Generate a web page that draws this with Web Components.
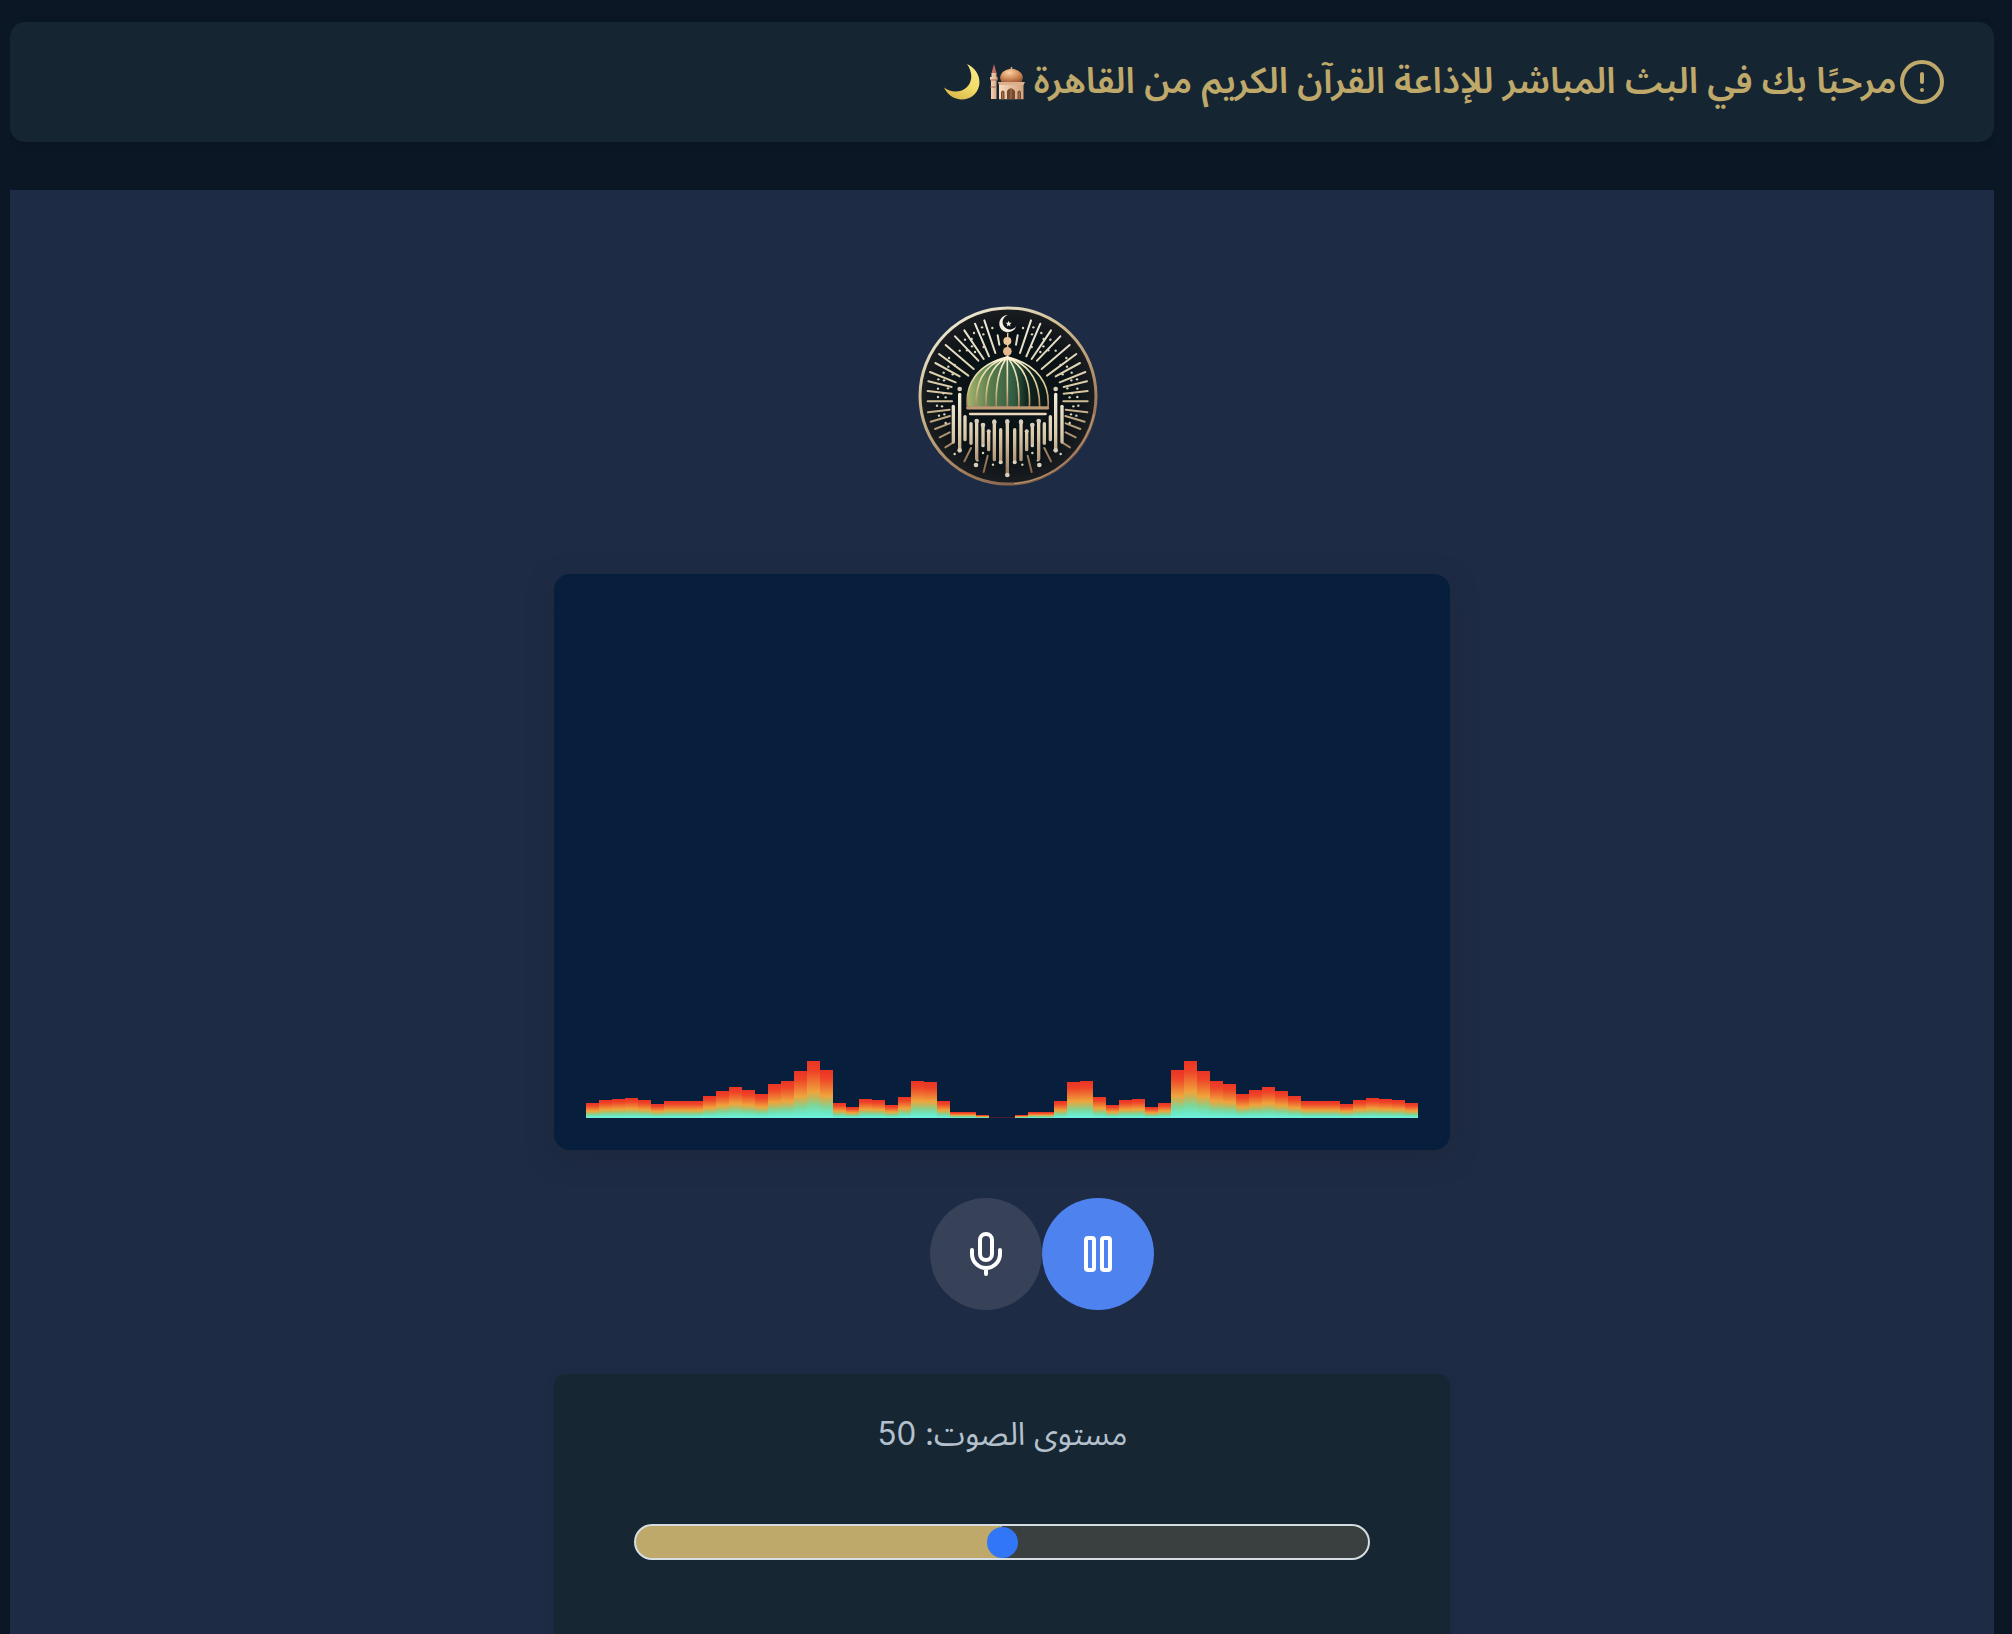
<!DOCTYPE html>
<html lang="ar" dir="rtl">
<head>
<meta charset="utf-8">
<title>إذاعة القرآن الكريم من القاهرة</title>
<style>
html,body{margin:0;height:100%;background:#0b1724;overflow:hidden}
body{font-family:"Noto Sans Arabic","Noto Sans","DejaVu Sans",sans-serif}
</style>
</head>
<body>
<radio-page></radio-page>
<script>
const define=(name,html,ready)=>customElements.define(name,class extends HTMLElement{
  connectedCallback(){
    if(this.shadowRoot)return;
    const root=this.attachShadow({mode:'open'});
    root.innerHTML=html;
    if(ready)ready.call(this,root);
  }
});

/* Squeezes or stretches one line of text to the width given in the attribute. */
define('fit-text',`<style>:host{display:block;white-space:nowrap}
span{display:inline-block;transform-origin:100% 50%}</style><span><slot></slot></span>`,function(root){
  const want=+this.getAttribute('width'),s=root.querySelector('span');
  this.style.width=want+'px';
  s.style.transform='scaleX('+want/s.getBoundingClientRect().width+')';
});

define('alert-icon',`<style>:host{display:block;width:48px;height:48px}svg{display:block}</style>
<svg width="48" height="48" viewBox="0 0 24 24" fill="none" stroke="currentColor" stroke-width="2" stroke-linecap="round"><circle cx="12" cy="12" r="10"/><path d="M12 8v4M12 16h.01"/></svg>`);

define('moon-emoji',`<style>:host{display:block;width:36px;height:36px}svg{display:block}</style>
<svg width="36" height="36" viewBox="0 0 36 36" role="img"><defs><linearGradient id="m" x1=".8" y1="0" x2=".3" y2="1"><stop offset="0" stop-color="#f7e98a"/><stop offset=".55" stop-color="#f1dc66"/><stop offset="1" stop-color="#d9b84a"/></linearGradient></defs>
<path d="M23 0C32 4 37 13 35 22C33 31 25 36 17 35.500C9 35 3 30 0 23.500C7 29 17 29 23 23C29 17 28.500 8 23 0Z" fill="url(#m)"/></svg>`);

define('mosque-emoji',`<style>:host{display:block;width:36px;height:36px}svg{display:block}</style>
<svg width="36" height="36" viewBox="0 0 36 36" role="img"><defs>
<radialGradient id="d" cx=".4" cy=".3" r=".8"><stop offset="0" stop-color="#fbd0a4"/><stop offset=".5" stop-color="#d8935f"/><stop offset="1" stop-color="#995632"/></radialGradient>
<linearGradient id="w"><stop offset="0" stop-color="#f6d9bd"/><stop offset="1" stop-color="#d3a47d"/></linearGradient></defs>
<path d="M5 0L7.500 9H2.500Z" fill="#bd6a60"/><path d="M2.500 9h5v4h1v3H7.500V35H2V16H1V13h1.500Z" fill="url(#w)"/><path d="M1 16h8M1 23h7" stroke="#9a6b55" stroke-width="1"/>
<rect x="10" y="20" width="24.500" height="15.200" fill="url(#w)"/>
<path d="M12.500 18C8 10 16 5.500 22.500 4.500C29 5.500 37 10 32.500 18Z" fill="url(#d)"/><path d="M22.500 3v2" stroke="#d8a77d" stroke-width="1.500"/>
<path d="M9 18h27l-1.500 3H10Z" fill="#dcb08c"/>
<path d="M12 35v-7q1.800-3 3.500 0v7ZM28.500 35v-7q1.800-3 3.500 0v7ZM18 35v-8q3.500-5.500 8 0v8Z" fill="#754832"/><path d="M22 24v11M13.700 28v7M30.200 28v7" stroke="#af7a50"/></svg>`);

define('welcome-banner',`<style>
:host{display:flex;flex:none;align-items:center;height:120px;box-sizing:border-box;padding:0 48px;background:#162532;border-radius:15px;color:#bea86a;box-shadow:0 2px 8px #07101b33}
.t{font-size:36px;line-height:56px;font-weight:600;margin-inline-start:1px}
mosque-emoji{margin-inline-start:9px}moon-emoji{margin-inline-start:9px}
</style><alert-icon></alert-icon><fit-text class="t" width="863">مرحبًا بك في البث المباشر للإذاعة القرآن الكريم من القاهرة</fit-text><mosque-emoji aria-label="🕌"></mosque-emoji><moon-emoji aria-label="🌙"></moon-emoji>`);

define('radio-logo',`<style>:host{display:block;flex:none;width:180px;height:180px}svg{display:block}</style>
<svg width="180" height="180" viewBox="55 49 540 540" fill="none" stroke-linecap="round"><defs>
<linearGradient id="ring" x1=".2" y1="0" x2=".75" y2="1"><stop offset="0" stop-color="#f1efdc"/><stop offset=".35" stop-color="#cdb98c"/><stop offset=".7" stop-color="#a58461"/><stop offset="1" stop-color="#7b5843"/></linearGradient>
<linearGradient id="ray" gradientUnits="userSpaceOnUse" x1="0" y1="90" x2="0" y2="560"><stop offset="0" stop-color="#eeecdc"/><stop offset=".45" stop-color="#d9c9a3"/><stop offset="1" stop-color="#866345"/></linearGradient>
<linearGradient id="bar" gradientUnits="userSpaceOnUse" x1="0" y1="310" x2="0" y2="560"><stop offset="0" stop-color="#f5eedc"/><stop offset=".5" stop-color="#d9c9aa"/><stop offset="1" stop-color="#987758"/></linearGradient>
<linearGradient id="dome"><stop offset="0" stop-color="#a3b56d"/><stop offset=".3" stop-color="#567a4c"/><stop offset=".58" stop-color="#315b43"/><stop offset=".74" stop-color="#10251f"/><stop offset="1" stop-color="#0a1515"/></linearGradient>
<linearGradient id="rib" gradientUnits="userSpaceOnUse" x1="0" y1="200" x2="0" y2="355"><stop offset="0" stop-color="#fff6d8"/><stop offset=".6" stop-color="#d9c78f"/><stop offset="1" stop-color="#a87d58"/></linearGradient>
<radialGradient id="bg"><stop offset="0" stop-color="#081417"/><stop offset=".75" stop-color="#0b1216"/><stop offset="1" stop-color="#1c1e21"/></radialGradient></defs>
<circle cx="325" cy="319" r="264" fill="url(#bg)" stroke="url(#ring)" stroke-width="9"/>
<path d="M583 375A264 264 0 0 1 345 582" stroke="#dcb98a" stroke-width="2"/>
<g id="rays" stroke="url(#ray)" stroke-width="6"></g><g id="dots" fill="#ded5ba"></g>
<path d="M324 131v70" stroke="#e9c99c" stroke-width="4"/>
<path d="M325 76A26 26 0 1 0 350 108A22 22 0 1 1 325 76Z" fill="#f3efe2"/><path d="M327 93l2.500 6 6.500.5-5 4.500 1.500 6.500-5.500-3.500-5.500 3.500 1.500-6.500-5-4.500 6.500-.5Z" fill="#f3efe2"/>
<circle cx="323" cy="154" r="12" fill="#edc79a"/><circle cx="323" cy="185" r="13" fill="#e5b98d"/>
<path d="M203 353C197 285 230 225 323 202C416 225 451 285 445 353Z" fill="url(#dome)" stroke="url(#rib)" stroke-width="5"/>
<path d="M323 202V352M323 202C297 235 287 280 290 352M323 202C270 232 257 280 259 352M323 202C245 228 228 285 229 352M323 202C350 235 361 280 357 352M323 202C377 232 393 280 389 352M323 202C400 228 420 285 420 352" stroke="url(#rib)" stroke-width="5"/>
<path d="M204 355H444" stroke="#bd9874" stroke-width="9"/><path d="M211 373H438" stroke="#ead6bb" stroke-width="7"/>
<g id="bars" stroke="url(#bar)" stroke-width="10"></g><g id="knobs" fill="#d9cdbb"></g></svg>`,function(root){
  const NS='http://www.w3.org/2000/svg';
  const add=(id,tag,attrs)=>{const e=document.createElementNS(NS,tag);for(const k in attrs)e.setAttribute(k,attrs[k]);root.getElementById(id).append(e)};
  const both=f=>{f(x=>x);f(x=>648-x)};
  const rays=[[254,92,287,190],[226,102,268,200],[194,122,252,208],[166,140,236,213],[138,166,222,238],[118,193,206,258],[107,220,180,260],[91,247,168,278],[86,275,156,292],[84,304,156,312],[84,335,157,335],[85,368,150,360],[93,396,151,379],[106,418,150,401],[120,443,150,428],[137,473,160,459],[214,475,194,515],[264,498,252,547],[294,137,299,165]];
  const dots=[[196,150],[223,130],[247,113],[278,115],[216,148],[251,134],[217,170],[252,172],[180,183],[202,182],[226,187],[148,205],[165,226],[146,231],[132,249],[159,254],[116,269],[133,272],[145,296],[115,297],[131,311],[115,322],[138,323],[112,348],[127,350],[118,378],[134,374],[138,400],[165,493],[250,490],[280,525],[233,512]];
  both(m=>{
    rays.forEach(([a,b,c,d])=>add('rays','line',{x1:m(a),y1:b,x2:m(c),y2:d}));
    dots.forEach(([a,b])=>add('dots','circle',{cx:m(a),cy:b,r:3.6}));
    [[161,350,457],[180,314,476],[196,381,450],[214,402,461],[231,394,508],[250,406,465],[267,425,480],[284,394,510],[303,420,518]].forEach(([x,t,b])=>add('bars','line',{x1:m(x),x2:m(x),y1:t,y2:b}));
    [[180,298,7],[180,482,7],[229,526,7],[250,406,7],[267,425,6],[231,394,7],[284,397,7],[303,518,6],[250,468,5]].forEach(([x,y,r])=>add('knobs','circle',{cx:m(x),cy:y,r}));
  });
  add('bars','line',{x1:323,x2:323.01,y1:394,y2:552});
  add('knobs','circle',{cx:323,cy:396,r:7});add('knobs','circle',{cx:323,cy:556,r:7});
});

define('audio-bars',`<style>
:host{display:flex;flex:none;align-items:flex-end;width:896px;height:576px;box-sizing:border-box;padding:32px;background:#071e3c;border-radius:16px;box-shadow:0 8px 24px #1a263599;direction:ltr}
i{display:block;width:13px;background:linear-gradient(#ea3324 0,#ee4428 18%,#ef7832 38%,#f0a43c 54%,#c3b65a 64%,#80d596 77%,#6ce8c4 89%,#70f2e0 100%)}
</style>`,function(root){
  const tops=[220,210,206,205,210,222,212,212,212,198,182,172,180,192,162,152,122,93,120,218,230,207,210,225,201,154,157,214,247,246,256,262];
  tops.concat([...tops].reverse()).forEach(t=>{
    const bar=document.createElement('i'),h=(264-t)/3;
    bar.style.height=h+'px';
    if(h<1)bar.style.background='#4c1c35';
    root.append(bar);
  });
});

define('round-button',`<style>:host{display:flex;align-items:center;justify-content:center;width:112px;height:112px;border-radius:50%;background:#374158;color:#fff}
:host([primary]){background:#4e82ef}</style><slot></slot>`);

define('mic-icon',`<style>:host{display:block}svg{display:block}</style><svg width="48" height="48" viewBox="0 0 24 24" fill="none" stroke="currentColor" stroke-width="2" stroke-linecap="round" stroke-linejoin="round"><rect x="9" y="2" width="6" height="13" rx="3"/><path d="M19 10v2a7 7 0 0 1-14 0v-2M12 19v3"/></svg>`);
define('pause-icon',`<style>:host{display:block}svg{display:block}</style><svg width="48" height="48" viewBox="0 0 24 24" fill="none" stroke="currentColor" stroke-width="2" stroke-linejoin="round"><rect x="14" y="4" width="4" height="16" rx="1"/><rect x="6" y="4" width="4" height="16" rx="1"/></svg>`);

define('volume-slider',`<style>:host{display:flex;flex:none;justify-content:center;align-items:center;box-sizing:border-box;width:736px;height:36px;border:2px solid #d6dde2;border-radius:18px;background:linear-gradient(90deg,#bea86a 50%,#3a4040 50%)}
i{width:31px;height:31px;border-radius:50%;background:#3176f6}</style><i></i>`);

define('volume-card',`<style>:host{display:flex;flex:none;flex-direction:column;align-items:center;box-sizing:border-box;width:896px;height:300px;padding-top:32px;background:#162633;border-radius:12px;color:#b4c1cd;box-shadow:0 2px 8px #17263333}
fit-text{font-family:Inter,"Noto Sans Arabic","Noto Sans","DejaVu Sans",sans-serif;font-size:32px;line-height:56px;height:56px}volume-slider{margin-top:62px}</style>
<fit-text width="250">مستوى الصوت: 50</fit-text><volume-slider></volume-slider>`);

define('radio-page',`<style>
:host{display:flex;flex-direction:column;width:1984px;height:1634px;margin:0 18px 0 10px;padding-top:22px;box-sizing:border-box;gap:48px;overflow:hidden}
main{display:flex;flex-direction:column;align-items:center;height:1444px;flex:none;box-sizing:border-box;padding-top:116px;background:#1e2b45}
radio-logo{margin-right:-12px}audio-bars{margin-top:88px}
.controls{display:flex;flex:none;margin:48px 0 64px;padding-left:80px}
</style><welcome-banner></welcome-banner><main><radio-logo></radio-logo><audio-bars></audio-bars>
<div class="controls"><round-button primary><pause-icon></pause-icon></round-button><round-button><mic-icon></mic-icon></round-button></div>
<volume-card></volume-card></main>`);
</script>
</body>
</html>
